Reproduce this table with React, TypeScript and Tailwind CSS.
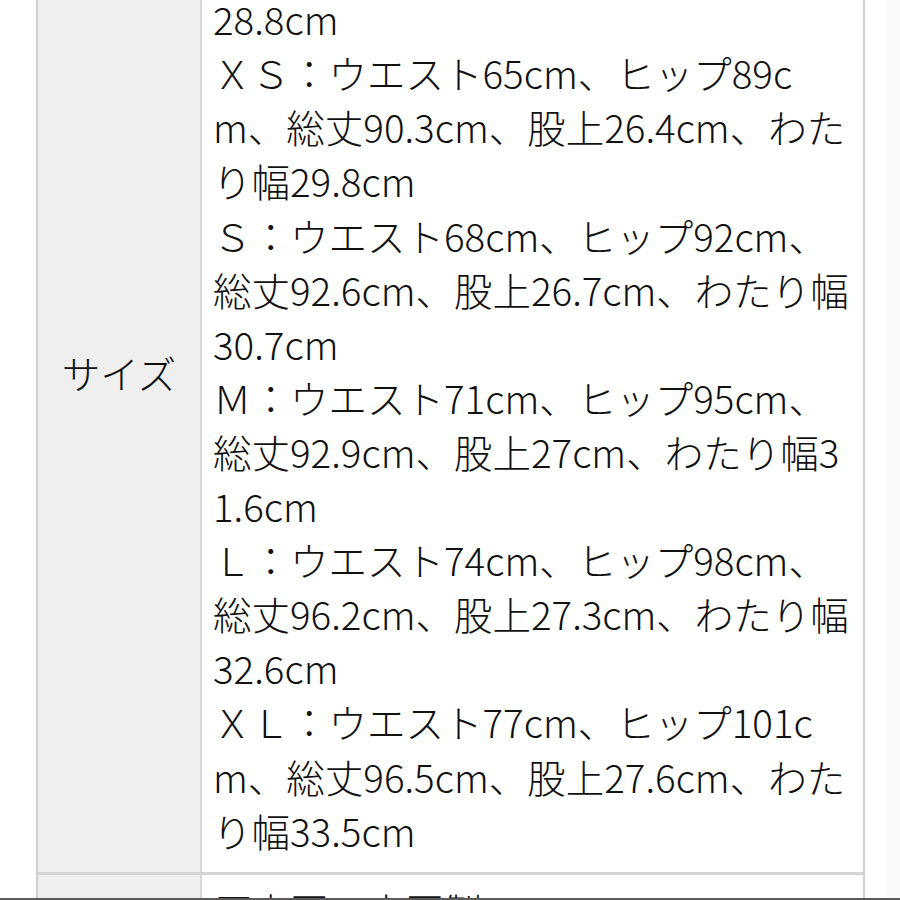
const sizeLines = [
  "ＸＸＳ：ウエスト62cm、ヒップ86c",
  "m、総丈88.1cm、股上26.1cm、わたり幅",
  "28.8cm",
  "ＸＳ：ウエスト65cm、ヒップ89c",
  "m、総丈90.3cm、股上26.4cm、わた",
  "り幅29.8cm",
  "Ｓ：ウエスト68cm、ヒップ92cm、",
  "総丈92.6cm、股上26.7cm、わたり幅",
  "30.7cm",
  "Ｍ：ウエスト71cm、ヒップ95cm、",
  "総丈92.9cm、股上27cm、わたり幅3",
  "1.6cm",
  "Ｌ：ウエスト74cm、ヒップ98cm、",
  "総丈96.2cm、股上27.3cm、わたり幅",
  "32.6cm",
  "ＸＬ：ウエスト77cm、ヒップ101c",
  "m、総丈96.5cm、股上27.6cm、わた",
  "り幅33.5cm",
];

export default function App() {
  return (
    <div
      className="flex h-[900px] flex-col overflow-hidden bg-white text-[38.5px] font-light leading-[54.1px] text-[#111]"
      style={{ fontFamily: '"Noto Sans CJK JP", "Noto Sans", sans-serif' }}
    >
      <div className="flex h-[898px] overflow-hidden">
        <div className="w-[36px] shrink-0" />
        {/* spec table */}
        <div className="mt-[-128px] w-[829px] shrink-0 border-x-2 border-[#cfcfcf]">
          <div className="flex border-b-[3px] border-[#d4d4d4]">
            <div className="flex w-[164px] shrink-0 items-center justify-center border-r-2 border-[#d6d6d6] bg-[#efefef]">
              サイズ
            </div>
            <div className="flex-1 pt-[11px] pb-[15px] pl-[11px]">
              {sizeLines.map((line, i) => (
                <div key={i} className="whitespace-nowrap">
                  {line}
                </div>
              ))}
            </div>
          </div>
          <div className="flex">
            <div className="w-[164px] shrink-0 border-r-2 border-[#d6d6d6] bg-[#efefef]">
              &nbsp;
            </div>
            <div className="flex-1 pt-[8px] pl-[11px] whitespace-nowrap">原産国：中国製</div>
          </div>
        </div>
        <div className="w-[22px] shrink-0" />
        <div className="flex-1 bg-[#f9f9f9]" />
      </div>
      <div className="h-[2px] bg-[#5a5a5a]" />
    </div>
  );
}
